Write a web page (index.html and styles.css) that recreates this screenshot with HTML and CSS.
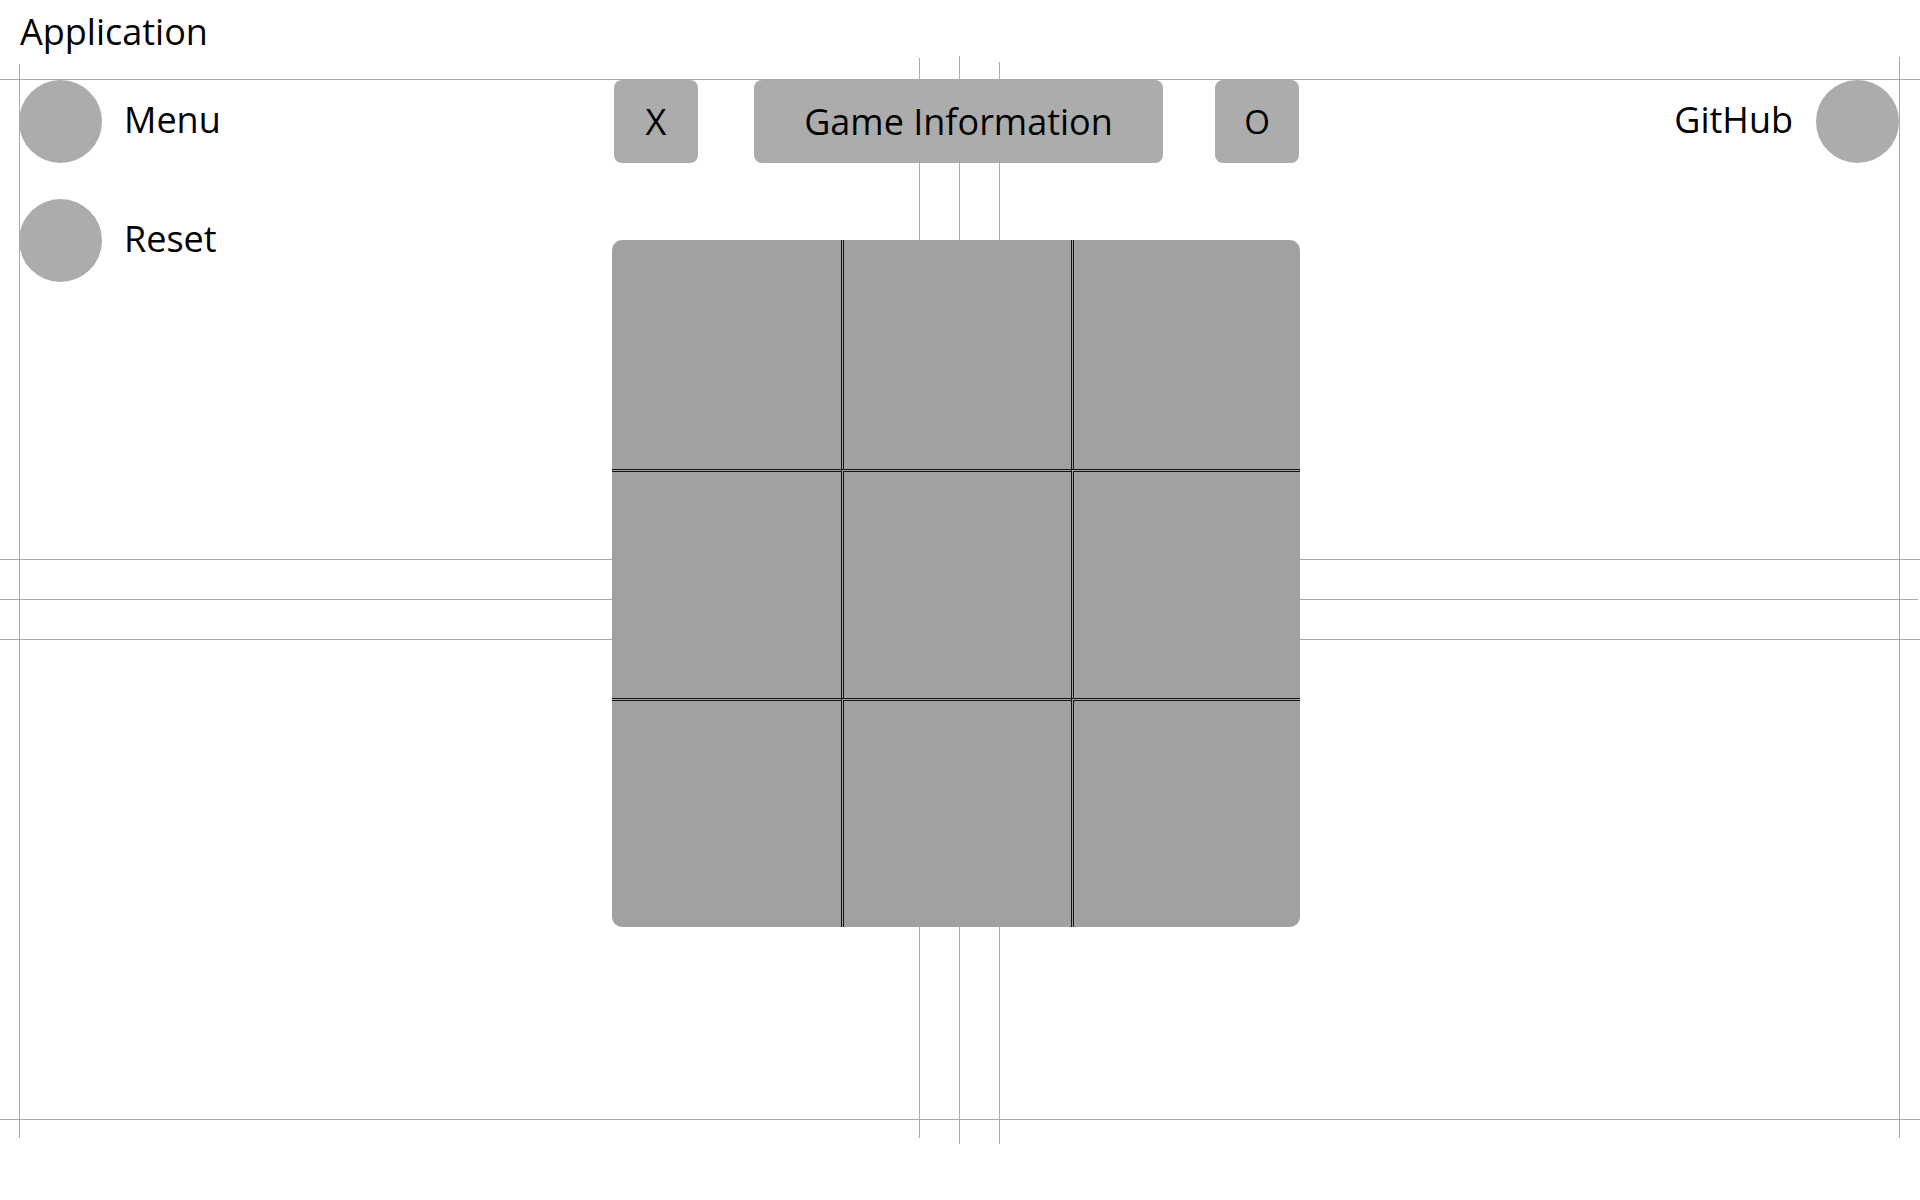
FILE: index.html
```html
<!DOCTYPE html>
<html lang="en">
<head>
<meta charset="UTF-8">
<title>Application</title>

<link rel="stylesheet" href="styles.css">
</head>

<body>

<!-- alignment guides, drawn under everything -->
<div class="guides">
    <span class="hline top"></span>
    <span class="hline mid-a"></span>
    <span class="hline mid-b"></span>
    <span class="hline mid-c"></span>
    <span class="hline bottom"></span>
    <span class="vline left"></span>
    <span class="vline right"></span>
    <span class="vline center-a"></span>
    <span class="vline center-b"></span>
    <span class="vline center-c"></span>
</div>

<header class="titlebar">
    <h1>Application</h1>
</header>

<main class="layout">
    <nav class="side">
        <div class="side-item">
            <span class="dot"></span>
            <span class="label">Menu</span>
        </div>
        <div class="side-item">
            <span class="dot"></span>
            <span class="label">Reset</span>
        </div>
    </nav>

    <section class="game">
        <div class="players">
            <div class="tag">X</div>
            <div class="tag info">Game Information</div>
            <div class="tag o">O</div>
        </div>

        <div class="board">
            <div class="cell"></div>
            <div class="cell"></div>
            <div class="cell"></div>
            <div class="cell"></div>
            <div class="cell"></div>
            <div class="cell"></div>
            <div class="cell"></div>
            <div class="cell"></div>
            <div class="cell"></div>
        </div>
    </section>

    <div class="links">
        <div class="side-item">
            <span class="label">GitHub</span>
            <span class="dot"></span>
        </div>
    </div>
</main>

</body>
</html>
```

FILE: styles.css
```css
body {
    margin: 0;
    width: 1920px;
    height: 1200px;
    overflow: hidden;
    position: relative;
    background: #fff;
    font-family: 'Open Sans', 'Noto Sans', sans-serif;
    font-size: 36px;
    line-height: 48px;
    color: #000;
}

/* Guides */
.guides {
    position: absolute;
    inset: 0;
    z-index: 0;
}

.hline,
.vline {
    position: absolute;
    background: #ababab;
}

.hline {
    left: 0;
    width: 1920px;
    height: 1px;
}

.vline {
    width: 1px;
}

.top { top: 79px; }
.mid-a { top: 559px; }
.mid-b { top: 599px; width: 1918px; }
.mid-c { top: 639px; }
.bottom { top: 1119px; }

.left { left: 19px; top: 64px; height: 1074px; }
.right { left: 1899px; top: 57px; height: 1081px; }
.center-a { left: 919px; top: 58px; height: 1080px; }
.center-b { left: 959px; top: 56px; height: 1088px; }
.center-c { left: 999px; top: 62px; height: 1082px; }

/* Title */
.titlebar {
    position: relative;
    z-index: 1;
    height: 80px;
    box-sizing: border-box;
    padding: 8px 0 0 20px;
}

h1 {
    margin: 0;
    font-size: 36px;
    font-weight: normal;
}

/* Main layout */
.layout {
    position: relative;
    z-index: 1;
    display: grid;
    grid-template-columns: 593px 688px 1fr;
    padding: 0 21px 0 19px;
}

.side {
    display: flex;
    flex-direction: column;
    gap: 36px;
}

.side-item {
    display: flex;
    align-items: center;
    gap: 22px;
}

.dot {
    width: 83px;
    height: 83px;
    border-radius: 50%;
    background: #acacac;
    flex-shrink: 0;
}

.label {
    padding-bottom: 4px;
}

.links {
    display: flex;
    justify-content: flex-end;
    align-items: flex-start;
}

.links .side-item {
    gap: 23px;
}

/* Game */
.players {
    display: flex;
    padding-left: 2px;
    margin-bottom: 77px;
}

.tag {
    width: 84px;
    height: 83px;
    border-radius: 8px;
    background: #acacac;
    display: flex;
    align-items: center;
    justify-content: center;
}

.info {
    width: 409px;
    margin-left: 56px;
}

.o {
    margin-left: 52px;
    font-size: 33px;
}

.board {
    width: 688px;
    height: 687px;
    border-radius: 10px;
    overflow: hidden;
    background: #a1a1a1;
    display: grid;
    grid-template-columns: repeat(3, 1fr);
    grid-template-rows: repeat(3, 1fr);
}

.cell {
    box-sizing: border-box;
}

.cell:nth-child(3n+2),
.cell:nth-child(3n+3) {
    border-left: 3px double #141414;
}

.cell:nth-child(n+4) {
    border-top: 3px double #141414;
}
```
